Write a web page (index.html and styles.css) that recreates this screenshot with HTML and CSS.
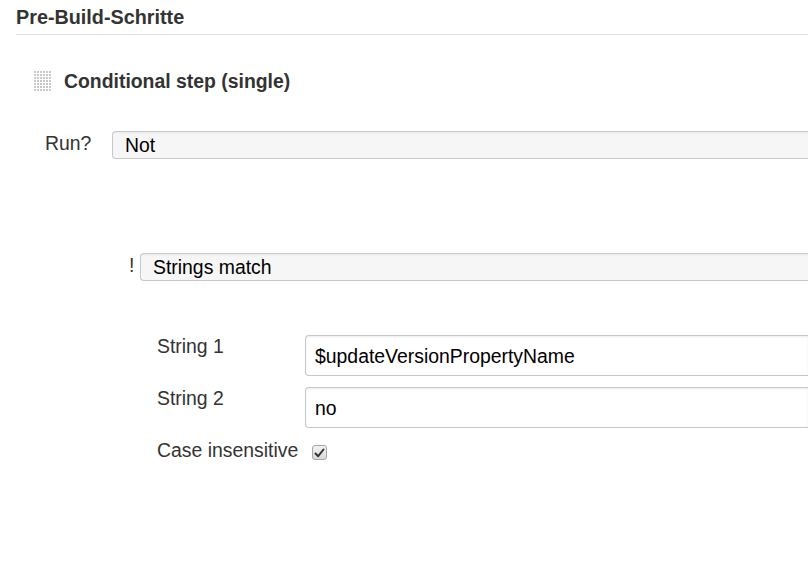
FILE: index.html
```html
<!DOCTYPE html>
<html>
<head>
<meta charset="utf-8">
<link rel="stylesheet" href="styles.css">
</head>
<body>
<div class="page">
  <div class="section-head">Pre-Build-Schritte</div>
  <div class="step">
    <div class="step-head">
      <svg class="grip" width="18" height="20" viewBox="0 0 18 20">
        <defs>
          <pattern id="dots" width="3" height="3" patternUnits="userSpaceOnUse">
            <rect x="0" y="0" width="2" height="2" fill="#c9c9c9"/>
          </pattern>
        </defs>
        <rect x="0" y="0" width="18" height="20" fill="url(#dots)"/>
      </svg>
      <span class="step-title">Conditional step (single)</span>
    </div>
    <div class="run-row">
      <span class="run-label">Run?</span>
      <div class="select">Not</div>
    </div>
    <div class="cond-row">
      <span class="bang">!</span>
      <div class="select">Strings match</div>
    </div>
    <div class="fields">
      <span class="f-label">String 1</span>
      <div class="input">$updateVersionPropertyName</div>
      <span class="f-label">String 2</span>
      <div class="input">no</div>
      <span class="f-label">Case insensitive</span>
      <div class="check-cell">
        <span class="checkbox">
          <svg width="11" height="10" viewBox="0 0 11 10"><path d="M1.5 5.5 L4.2 8.2 L9.5 1.5" fill="none" stroke="#333" stroke-width="2" stroke-linecap="round" stroke-linejoin="round"/></svg>
        </span>
      </div>
    </div>
  </div>
</div>
</body>
</html>
```
FILE: styles.css
```css
html, body {
  margin: 0;
  padding: 0;
  background: #fff;
  overflow: hidden;
}
body {
  font-family: "Liberation Sans", Arial, sans-serif;
  font-size: 19.4px;
  color: #333;
  width: 808px;
  height: 570px;
}
.page {
  padding-left: 16px;
}
.section-head {
  font-weight: bold;
  font-size: 19.8px;
  height: 34px;
  line-height: 34px;
  border-bottom: 1px solid #e2e2e2;
  color: #333;
}
.step {
  padding-top: 34px;
}
.step-head {
  display: flex;
  align-items: center;
  height: 24px;
  padding-left: 18px;
}
.grip {
  display: block;
  flex: none;
  margin-right: 12px;
}
.step-title {
  font-weight: bold;
  line-height: 24px;
  color: #333;
}
.run-row {
  display: flex;
  align-items: flex-start;
  margin-top: 38px;
  padding-left: 29px;
}
.run-label {
  flex: none;
  width: 67px;
  line-height: 24px;
  color: #333;
}
.select {
  box-sizing: border-box;
  flex: 1;
  min-width: 0;
  height: 28px;
  line-height: 26px;
  border: 1px solid #c8c8c8;
  border-right: none;
  border-radius: 4px 0 0 4px;
  background: linear-gradient(#ececec, #f6f6f6 3px, #f6f6f6);
  color: #000;
  padding-left: 12px;
  white-space: nowrap;
}
.cond-row {
  display: flex;
  align-items: flex-start;
  margin-top: 94px;
  padding-left: 113px;
}
.bang {
  flex: none;
  width: 11px;
  line-height: 24px;
  color: #333;
}
.fields {
  display: grid;
  grid-template-columns: 148px 1fr;
  row-gap: 11px;
  margin-top: 54px;
  padding-left: 141px;
}
.f-label {
  line-height: 22px;
  color: #333;
  white-space: nowrap;
}
.input {
  box-sizing: border-box;
  height: 41px;
  padding-top: 1px;
  line-height: 38px;
  border: 1px solid #c8c8c8;
  border-right: none;
  border-radius: 4px 0 0 4px;
  box-shadow: inset 0 1px 2px rgba(0,0,0,0.08);
  background: #fff;
  color: #000;
  padding-left: 9px;
  white-space: nowrap;
}
.check-cell {
  padding-left: 7px;
  padding-top: 6px;
}
.checkbox {
  box-sizing: border-box;
  display: flex;
  align-items: center;
  justify-content: center;
  width: 15px;
  height: 15px;
  border: 1px solid #a6a6a6;
  border-radius: 3px;
  background: linear-gradient(#f2f2f2, #d9d9d9);
}
.checkbox svg { display: block; }
```
